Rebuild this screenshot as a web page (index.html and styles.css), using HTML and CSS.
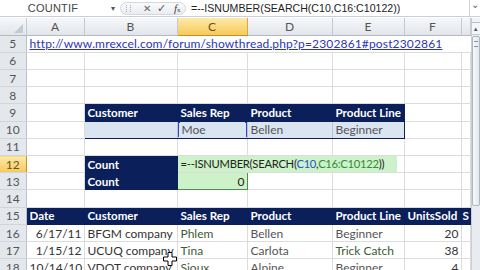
FILE: index.html
```html
<!DOCTYPE html>
<html lang="en">
<head>
  <meta charset="UTF-8">
  <meta name="viewport" content="width=device-width, initial-scale=1.0">
  <title>COUNTIF - ISNUMBER SEARCH</title>
  <link rel="stylesheet" href="styles.css">
</head>
<body>

<div class="formula-bar">
  <div class="name-box">COUNTIF</div>
  <span class="name-arrow">&#9662;</span>
  <div class="fx-buttons">
    <span class="fx-grip"></span>
    <span class="fx-btn">&#10005;</span>
    <span class="fx-btn check">&#10003;</span>
    <span class="fx-btn fx"><i>f</i><small>x</small></span>
  </div>
  <div class="formula-text">=--ISNUMBER(SEARCH(C10,C16:C10122))</div>
  <div class="formula-expand">&#8964;</div>
</div>

<div class="sheet">
  <table class="grid">
    <colgroup>
      <col class="c-rh"><col class="c-a"><col class="c-b"><col class="c-c">
      <col class="c-d"><col class="c-e"><col class="c-f"><col class="c-g">
    </colgroup>
    <tr class="col-heads">
      <th class="corner"><span></span></th>
      <th>A</th><th>B</th><th class="active">C</th><th>D</th><th>E</th><th>F</th><th></th>
    </tr>
    <tr>
      <th class="rh">5</th>
      <td class="link" colspan="7"><span>http://www.mrexcel.com/forum/showthread.php?p=2302861#post2302861</span></td>
    </tr>
    <tr><th class="rh">6</th><td></td><td></td><td></td><td></td><td></td><td></td><td></td></tr>
    <tr><th class="rh">7</th><td></td><td></td><td></td><td></td><td></td><td></td><td></td></tr>
    <tr><th class="rh">8</th><td></td><td></td><td></td><td></td><td></td><td></td><td></td></tr>
    <tr>
      <th class="rh">9</th><td></td>
      <td class="hd lt">Customer</td><td class="hd">Sales Rep</td><td class="hd">Product</td><td class="hd rt">Product Line</td>
      <td></td><td></td>
    </tr>
    <tr>
      <th class="rh">10</th><td></td>
      <td class="crit lt bt"></td><td class="crit bt ref"><div class="ref-box">Moe</div></td><td class="crit bt">Bellen</td><td class="crit bt rt">Beginner</td>
      <td></td><td></td>
    </tr>
    <tr><th class="rh">11</th><td></td><td></td><td></td><td></td><td></td><td></td><td></td></tr>
    <tr>
      <th class="rh active">12</th><td></td>
      <td class="hd">Count</td>
      <td class="edit" colspan="3"><div class="edit-box">=--ISNUMBER(SEARCH(<span class="ref-blue">C10</span>,<span class="ref-green">C16:C10122</span>))</div></td>
      <td></td><td></td>
    </tr>
    <tr>
      <th class="rh">13</th><td></td>
      <td class="hd">Count</td><td class="result">0</td><td></td><td></td><td></td><td></td>
    </tr>
    <tr><th class="rh">14</th><td></td><td></td><td></td><td></td><td></td><td></td><td></td></tr>
    <tr>
      <th class="rh">15</th>
      <td class="hd">Date</td><td class="hd">Customer</td><td class="hd">Sales Rep</td><td class="hd">Product</td>
      <td class="hd">Product Line</td><td class="hd">UnitsSold</td><td class="hd clip">S</td>
    </tr>
    <tr>
      <th class="rh">16</th>
      <td class="num">6/17/11</td><td>BFGM company</td><td class="rep first">Phlem</td><td class="soft">Bellen</td>
      <td class="soft">Beginner</td><td class="num">20</td><td></td>
    </tr>
    <tr>
      <th class="rh">17</th>
      <td class="num">1/15/12</td><td>UCUQ company</td><td class="rep">Tina</td><td class="soft">Carlota</td>
      <td class="rep">Trick Catch</td><td class="num">38</td><td></td>
    </tr>
    <tr>
      <th class="rh">18</th>
      <td class="num">10/14/10</td><td>VDOT company</td><td class="rep">Sioux</td><td class="soft">Alpine</td>
      <td class="soft">Beginner</td><td class="num">4</td><td></td>
    </tr>
  </table>

  <div class="scrollbar">
    <div class="split"></div>
    <div class="arrow-up">&#9650;</div>
    <div class="thumb"><span></span></div>
  </div>

  <svg class="cursor" width="14" height="14" viewBox="0 0 14 14">
    <path d="M5 0.5h4v4.5h4.5v4h-4.5v4.5h-4v-4.5h-4.5v-4h4.5z" fill="#fff" stroke="#000" stroke-width="1"/>
  </svg>
</div>

</body>
</html>
```

FILE: styles.css
```css
body {
  margin: 0;
  padding: 0;
  width: 480px;
  height: 270px;
  overflow: hidden;
  background: #fff;
  font-family: Lato, "Liberation Sans", sans-serif;
}

/* barra de fórmulas */
.formula-bar {
  display: flex;
  align-items: center;
  height: 16px;
  border-bottom: 1px solid #c9cfd8;
  margin-bottom: 1px;
  font-family: "Liberation Sans", Arial, sans-serif;
  font-size: 11px;
  color: #333;
}
.formula-bar > * {
  flex-shrink: 0;
}
.name-box {
  width: 106px;
  text-align: center;
  letter-spacing: 0.2px;
  color: #444;
}
.name-arrow {
  width: 14px;
  font-size: 8px;
  color: #555;
  text-align: center;
}
.fx-buttons {
  display: flex;
  align-items: center;
  height: 13px;
  width: 66px;
  border: 1px solid #d4d8de;
  border-radius: 7px;
  background: linear-gradient(#fafbfc, #e9ecf0);
  box-sizing: border-box;
  margin-right: 5px;
}
.fx-grip {
  width: 3px;
  height: 7px;
  margin: 0 8px 0 5px;
  border-left: 1px dotted #aab;
  border-right: 1px dotted #aab;
}
.fx-btn {
  width: 16px;
  text-align: center;
  font-size: 10px;
  color: #666;
}
.fx-btn.check {
  font-size: 11px;
  color: #555;
}
.fx-btn.fx {
  font-family: "Liberation Serif", serif;
  font-size: 11px;
  color: #444;
}
.fx-btn.fx small {
  font-size: 7px;
}
.formula-text {
  flex: 1 1 auto;
  font-size: 10.6px;
  color: #222;
}
.formula-expand {
  width: 10px;
  height: 16px;
  border-left: 1px solid #cfd4db;
  text-align: center;
  font-size: 10px;
  line-height: 9px;
  color: #666;
}

/* hoja */
.sheet {
  display: flex;
  position: relative;
}
.grid {
  border-collapse: collapse;
  table-layout: fixed;
  width: 470px;
  font-size: 12px;
  color: #333;
}
.c-rh { width: 26px; }
.c-a { width: 58px; }
.c-b { width: 93px; }
.c-c { width: 70px; }
.c-d { width: 85px; }
.c-e { width: 72px; }
.c-f { width: 57px; }
.c-g { width: 9px; }

.grid tr {
  height: 17.23px;
}
.grid tr.col-heads {
  height: 17px;
}
.grid td {
  border: 1px solid #dcdcdc;
  padding: 0 2px 0 3px;
  white-space: nowrap;
  overflow: hidden;
  line-height: 15px;
}
.col-heads th {
  background: linear-gradient(#f6f7f9, #e1e5ea);
  border-right: 1px solid #c3cad3;
  border-bottom: 1px solid #b3bac4;
  font-weight: normal;
  font-size: 12px;
  color: #555;
  padding: 0;
}
.col-heads th.active {
  background: linear-gradient(#fde9a8, #f6c95a);
  border-right-color: #d9a840;
  border-bottom-color: #c98f20;
  color: #6a5220;
}
.col-heads th.corner {
  position: relative;
}
.corner span {
  position: absolute;
  right: 3px;
  bottom: 2px;
  width: 0;
  height: 0;
  border-left: 9px solid transparent;
  border-bottom: 9px solid #c4cad2;
}
th.rh {
  background: #e4e8ed;
  border-right: 1px solid #b8c0ca;
  border-bottom: 1px solid #cfd5dc;
  font-weight: normal;
  font-size: 12px;
  color: #555;
  padding: 0;
  text-align: center;
}
th.rh.active {
  background: linear-gradient(#fde9a8, #f6c95a);
  border-right-color: #c98f20;
  color: #6a5220;
}

.link span {
  color: #2a35b8;
  text-decoration: underline;
  letter-spacing: 0.15px;
}
.grid td.link {
  border-right: none;
}

.grid td.hd {
  background: #0b1f5a;
  color: #fff;
  font-weight: bold;
  font-size: 11.6px;
  border-color: #0b1f5a;
}
.grid td.hd.clip {
  padding-left: 1px;
}
.grid td.crit {
  background: #dbe5f1;
  color: #555;
  border-color: #b8c4d4;
}
.grid td.lt { border-left: 1px solid #0b1f5a; }
.grid td.rt { border-right: 1px solid #0b1f5a; }
.grid td.bt { border-bottom: 1px solid #0b1f5a; }

.grid td.ref {
  padding: 0;
}
.ref-box {
  position: relative;
  height: 15px;
  padding-left: 3px;
  border-left: 1px solid #3346c0;
  border-right: 1px solid #3346c0;
}
.ref-box::before,
.ref-box::after {
  content: "";
  position: absolute;
  top: -2px;
  width: 3px;
  height: 3px;
  background: #2b3ca8;
}
.ref-box::before { left: -2px; }
.ref-box::after { right: -2px; }

.grid td.edit {
  padding: 0;
  border-right-color: #dcdcdc;
}
.edit-box {
  width: 219px;
  height: 16px;
  background: #cdf1c9;
  padding-left: 3px;
  box-sizing: border-box;
  font-size: 11.2px;
  letter-spacing: -0.25px;
  color: #222;
  line-height: 16px;
}
.ref-blue { color: #2850c8; }
.ref-green { color: #2f8a3c; }

.grid td.result {
  background: #cdf1c9;
  text-align: right;
  color: #222;
  border: 1px solid #4f8f4a;
}

.grid td.num {
  text-align: right;
  color: #333;
}
.grid td.soft {
  color: #555;
}
.grid td.rep {
  color: #3f5a35;
}
.grid td.rep.first {
  border-left: 1px solid #5aa050;
}

/* barra de desplazamiento */
.scrollbar {
  width: 10px;
  background: #e8ecf0;
  border-left: 1px solid #c7ced7;
  box-sizing: border-box;
}
.split {
  height: 4px;
  border-bottom: 1px solid #b8c0ca;
  background: #f1f3f6;
}
.arrow-up {
  height: 11px;
  font-size: 6px;
  line-height: 11px;
  text-align: center;
  color: #555;
  background: #f4f6f8;
  border-bottom: 1px solid #c7ced7;
}
.thumb {
  height: 170px;
  margin: 1px 0 0 0;
  background: linear-gradient(to right, #f7f8fa, #e3e7ec);
  border: 1px solid #aeb6c1;
  border-radius: 2px;
  box-sizing: border-box;
}
.thumb span {
  display: block;
  width: 4px;
  height: 4px;
  margin: 4px auto 0;
  border-top: 1px solid #8a929c;
  border-bottom: 1px solid #8a929c;
}

/* cursor del ratón */
.cursor {
  position: absolute;
  left: 163px;
  top: 234px;
}
```
